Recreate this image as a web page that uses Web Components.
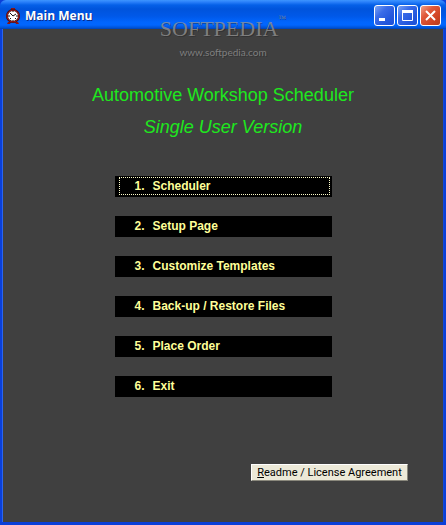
<!DOCTYPE html>
<html lang="en">
<head>
<meta charset="utf-8">
<title>Main Menu</title>
<style>
html, body { height: 100%; }
body {
	margin: 0;
	background: #404040;
	font-family: "Liberation Sans", Arial, sans-serif;
}
</style>
</head>
<body>

<template id="xp-window">
	<style>
	:host {
		display: flex;
		flex-direction: column;
		position: relative;
		box-sizing: border-box;
		min-height: 100%;
		background: #0a3fd8;
	}
	header {
		display: flex;
		align-items: center;
		box-sizing: border-box;
		height: 29px;
		padding: 2px 5px 0 6px;
		background: linear-gradient(#3d95ff 0, #2a80fa 2px, #0560e8 5px, #0054dc 9px, #0058e8 16px, #0165fd 22px, #0166ff 25px, #0050d0 28px, #0040b0 29px);
		border-radius: 6px 6px 0 0;
	}
	h1 {
		flex: 1;
		margin: 0 0 0 5px;
		font: bold 12px/20px "Open Sans", "Noto Sans", sans-serif;
		color: #fff;
		text-shadow: 1px 1px #0a2a88;
	}
	.buttons {
		display: flex;
		gap: 2px;
	}
	main {
		flex: 1;
		display: flex;
		flex-direction: column;
		margin: 0 3px 3px;
		background: #404040;
		box-shadow: -1px 0 #2a66f0, 1px 0 #1048d8;
	}
	</style>
	<header>
		<slot name="icon"></slot>
		<h1></h1>
		<div class="buttons">
			<caption-button kind="minimize"></caption-button>
			<caption-button kind="maximize"></caption-button>
			<caption-button kind="close"></caption-button>
		</div>
	</header>
	<main><slot></slot></main>
	<slot name="overlay"></slot>
</template>

<template id="caption-button">
	<style>
	:host { display: block; }
	button {
		display: block;
		box-sizing: border-box;
		width: 21px;
		height: 21px;
		padding: 0;
		border: 1px solid #fff;
		border-radius: 3px;
		background: linear-gradient(135deg, #7ba4f4, #3a6be8 35%, #2558dc 70%, #1c50d8);
	}
	:host([kind="close"]) button {
		background: linear-gradient(135deg, #f0a088, #e0583a 35%, #d04424 70%, #b83c1c);
	}
	svg { display: block; }
	</style>
	<button type="button"><svg width="19" height="19" viewBox="0 0 19 19" fill="none" stroke="#fff"></svg></button>
</template>

<template id="clock-icon">
	<style>
	:host { display: block; height: 16px; }
	svg { display: block; }
	</style>
	<svg width="14" height="16" viewBox="0 0 14 16">
		<path d="M5 0h4v2H5zM2 14h3l-1 2H1zM9 14h3l1 2h-3z" fill="#8a1414"/>
		<circle cx="7" cy="8" r="6" fill="#fff" stroke="#380808" stroke-width="2"/>
		<circle cx="7" cy="8" r="6" fill="none" stroke="#b02020"/>
		<path d="M7 3v1M7 12v1M2 8h2M10 8h2M4 5l3 3 3-2M4 11l1-1M9 10l1 1" stroke="#181010" fill="none"/>
	</svg>
</template>

<template id="main-heading">
	<style>
	:host {
		display: block;
		text-align: center;
		color: #1ee81e;
	}
	h2, p { margin: 0; }
	h2 { font: 18px/24px "Liberation Sans", Arial, sans-serif; }
	p {
		margin-top: 8px;
		font: italic 18px/24px "Liberation Sans", Arial, sans-serif;
	}
	</style>
	<h2><slot></slot></h2>
	<p><slot name="edition"></slot></p>
</template>

<template id="menu-list">
	<style>
	:host {
		display: flex;
		flex-direction: column;
		gap: 19px;
		width: 217px;
		margin: 0 auto;
	}
	</style>
	<slot></slot>
</template>

<template id="menu-item">
	<style>
	:host { display: block; }
	button {
		display: flex;
		box-sizing: border-box;
		width: 100%;
		height: 21px;
		padding: 1px 2px 1px 4px;
		border: 0;
		background: #000;
		color: #ffff99;
		font: bold 12px/17px "Liberation Sans", Arial, sans-serif;
		text-align: left;
	}
	.focus {
		flex: 1;
		display: flex;
		box-sizing: border-box;
		height: 18px;
		padding-left: 15px;
		border: 1px solid transparent;
	}
	:host([current]) .focus { border: 1px dotted #ffffcc; }
	.number { width: 18px; }
	</style>
	<button type="button">
		<span class="focus"><span class="number"></span><span><slot></slot></span></span>
	</button>
</template>

<template id="push-button">
	<style>
	:host {
		display: block;
		align-self: flex-end;
	}
	button {
		display: block;
		box-sizing: border-box;
		width: 157px;
		height: 17px;
		padding: 0;
		border: 1px solid;
		border-color: #fff #8a887c #8a887c #fff;
		background: #ece9d8;
		color: #000;
		font: 11px/15px Roboto, sans-serif;
	}
	</style>
	<button type="button"><slot></slot></button>
</template>

<template id="site-watermark">
	<style>
	:host {
		position: absolute;
		top: 15px;
		left: 0;
		right: 0;
		text-align: center;
		pointer-events: none;
		color: rgba(150, 150, 150, .75);
		text-shadow: 1px 1px rgba(30, 30, 30, .4);
	}
	.brand { font: 22px/28px "Liberation Serif", serif; }
	sup { font-size: 8px; line-height: 8px; vertical-align: top; }
	.url { font: 10px/18px Lato, sans-serif; }
	</style>
	<div class="brand">SOFTPEDIA<sup>™</sup></div>
	<div class="url">www.softpedia.com</div>
</template>

<style>
xp-window main-heading { margin-top: 54px; }
xp-window menu-list { margin-top: 37px; }
xp-window push-button { margin: 67px 35px 40px 0; }
</style>

<xp-window caption="Main Menu">
	<clock-icon slot="icon"></clock-icon>
	<main-heading>Automotive Workshop Scheduler<span slot="edition">Single User Version</span></main-heading>
	<menu-list>
		<menu-item number="1" current>Scheduler</menu-item>
		<menu-item number="2">Setup Page</menu-item>
		<menu-item number="3">Customize Templates</menu-item>
		<menu-item number="4">Back-up / Restore Files</menu-item>
		<menu-item number="5">Place Order</menu-item>
		<menu-item number="6">Exit</menu-item>
	</menu-list>
	<push-button><u>R</u>eadme / License Agreement</push-button>
	<site-watermark slot="overlay"></site-watermark>
</xp-window>

<script>
(function(){
	class TemplateElement extends HTMLElement {
		constructor() {
			super();
			var template = document.getElementById(this.localName);
			this.attachShadow({mode: 'open'}).appendChild(document.importNode(template.content, true));
		}
		$(selector) {
			return this.shadowRoot.querySelector(selector);
		}
	}

	class XpWindow extends TemplateElement {
		connectedCallback() {
			this.$("h1").textContent = this.getAttribute("caption");
		}
	}

	var glyphs = {
		minimize: '<path d="M4 13.5h6" stroke-width="3"/>',
		maximize: '<path d="M4.5 5v9.500h10V5" /><path d="M4 5.500h11" stroke-width="3"/>',
		close: '<path d="M5 5l9 9M14 5l-9 9" stroke-width="2"/>'
	};

	class CaptionButton extends TemplateElement {
		connectedCallback() {
			var kind = this.getAttribute("kind");
			this.$("svg").innerHTML = glyphs[kind];
			this.$("button").setAttribute("aria-label", kind);
		}
	}

	class MenuItem extends TemplateElement {
		connectedCallback() {
			this.$(".number").textContent = this.getAttribute("number") + ".";
		}
	}

	customElements.define("caption-button", CaptionButton);
	customElements.define("xp-window", XpWindow);
	customElements.define("clock-icon", class extends TemplateElement {});
	customElements.define("main-heading", class extends TemplateElement {});
	customElements.define("menu-list", class extends TemplateElement {});
	customElements.define("menu-item", MenuItem);
	customElements.define("push-button", class extends TemplateElement {});
	customElements.define("site-watermark", class extends TemplateElement {});
})()
</script>
</body>
</html>
